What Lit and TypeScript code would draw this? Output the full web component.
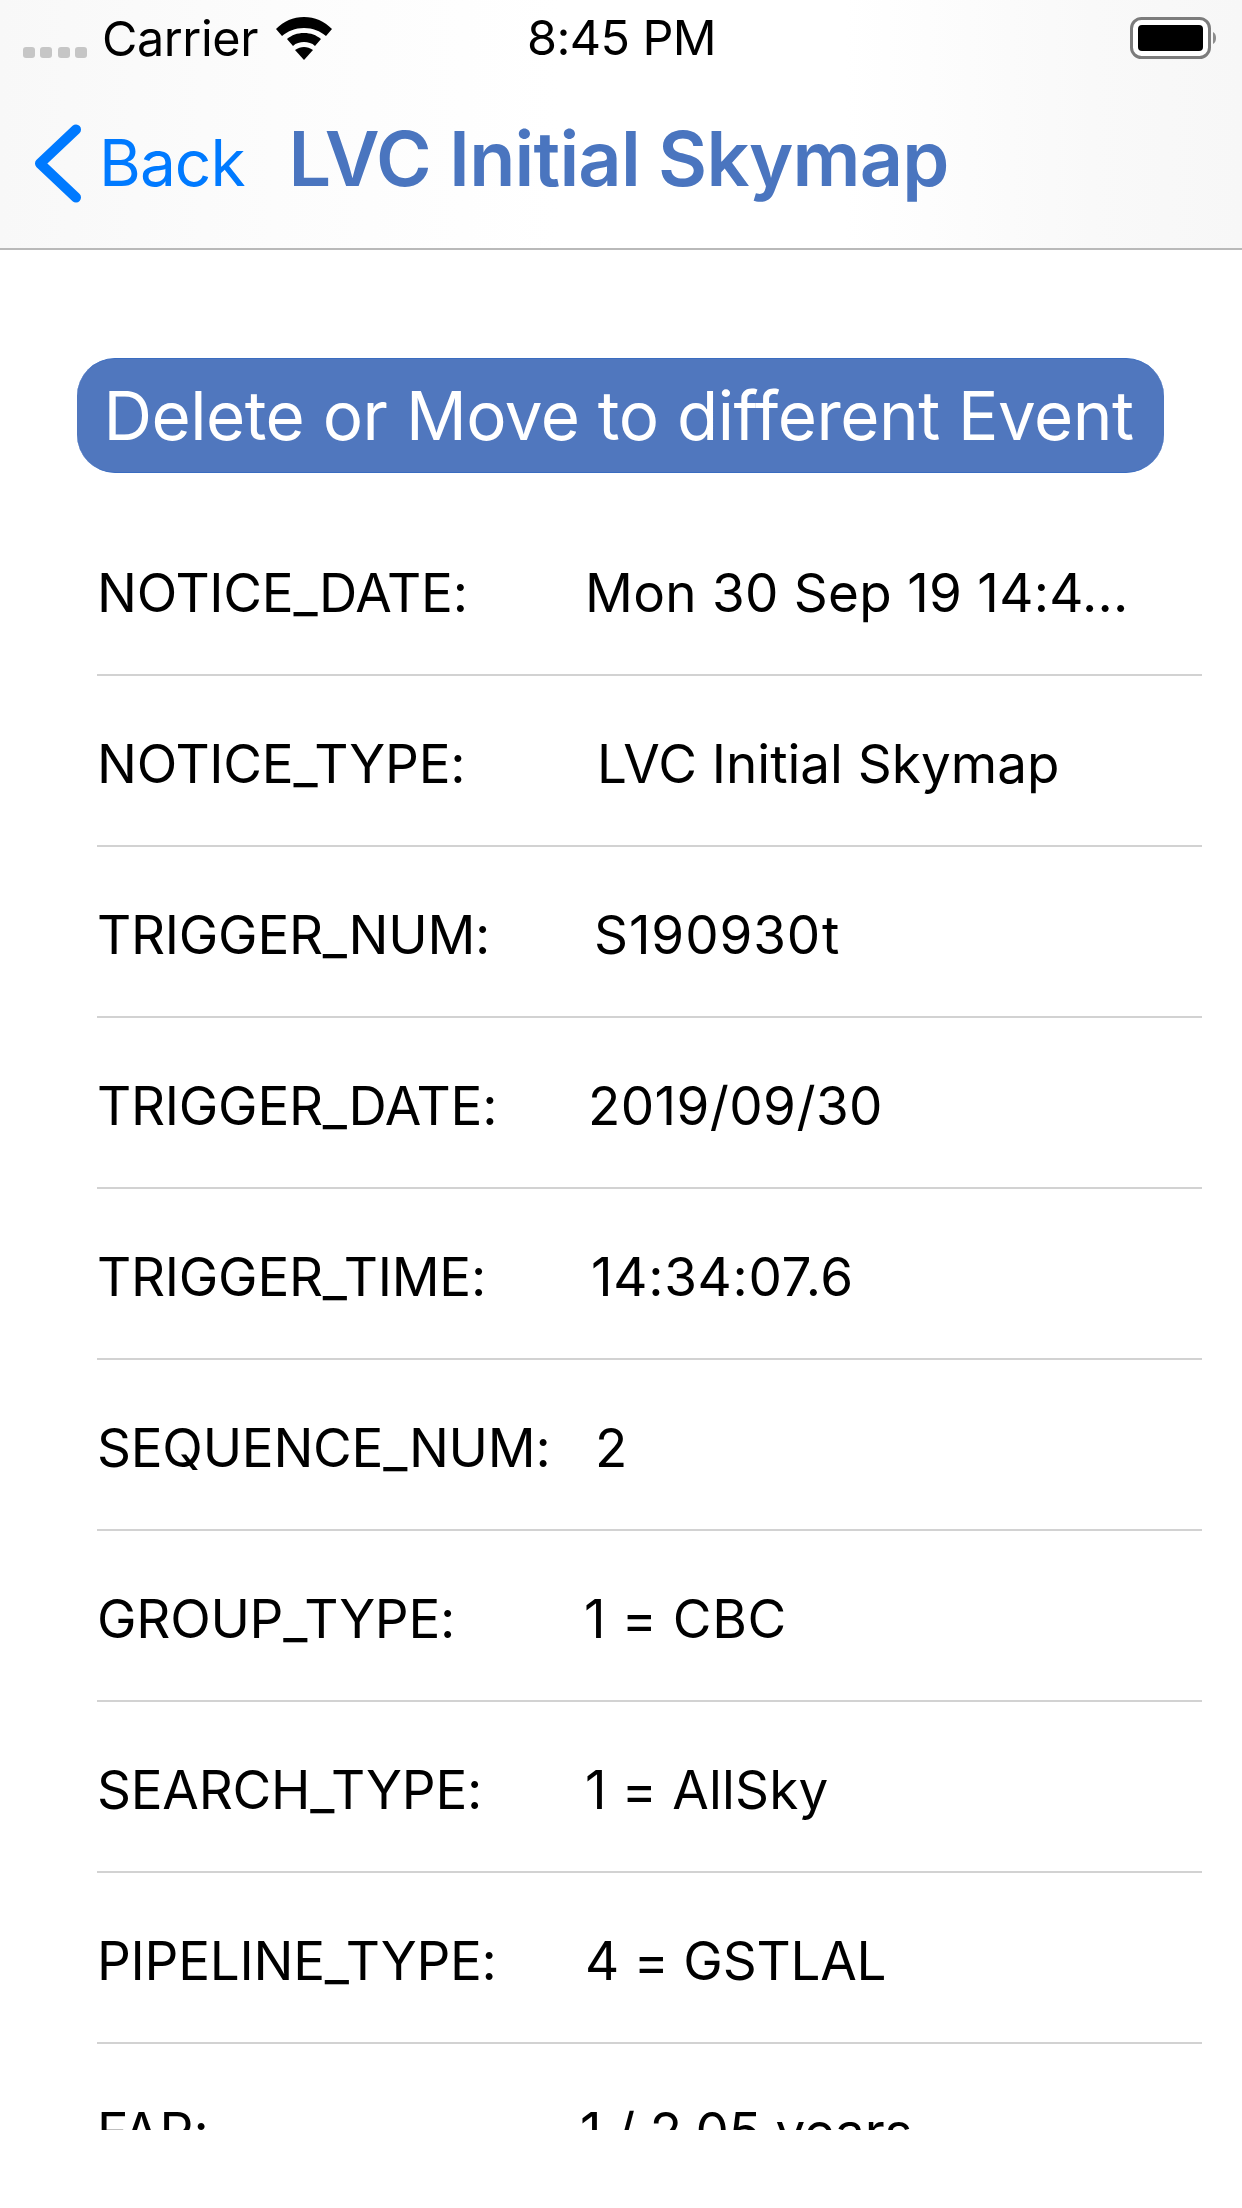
import { LitElement, html, css } from "lit";
import { customElement } from "lit/decorators.js";

const ROWS: [string, string, number, number][] = [
  ["NOTICE_DATE:", "Mon 30 Sep 19 14:4...", 585, 0.27],
  ["NOTICE_TYPE:", "LVC Initial Skymap", 597, 0],
  ["TRIGGER_NUM:", "S190930t", 594, 0.9],
  ["TRIGGER_DATE:", "2019/09/30", 588, 0.4],
  ["TRIGGER_TIME:", "14:34:07.6", 591, 0.7],
  ["SEQUENCE_NUM:", "2", 595, 0],
  ["GROUP_TYPE:", "1 = CBC", 584, 0.6],
  ["SEARCH_TYPE:", "1 = AllSky", 585, 0.2],
  ["PIPELINE_TYPE:", "4 = GSTLAL", 585, -0.2],
  ["FAR:", "1 / 2.05 years", 580, -0.2],
];

@customElement("app-root")
export class AppRoot extends LitElement {
  static styles = css`
    :host { display: block; width: 1242px; height: 2208px; background: #fff; overflow: hidden;
      font-family: Inter, "Liberation Sans", sans-serif; color: #000; }
    .header { height: 250px; box-sizing: border-box; border-bottom: 2px solid #b9b9b9;
      background: linear-gradient(90deg, #f8f8f8 0, #fcfcfc 22%, #fff 45%, #fff 68%, #f9f9f9 88%, #f7f7f7 100%); }
    .status { height: 76px; display: flex; align-items: center; padding: 0 26px 0 23px; position: relative; font-size: 48.5px; letter-spacing: -0.4px; }
    .dots { display: flex; gap: 5.3px; margin-top: 29px; }
    .dots i { width: 12px; height: 11px; border-radius: 3px; background: #c6c6c6; display: block; }
    .carrier { margin-left: 15px; }
    .wifi { margin-left: 18px; width: 56px; height: 43px; display: block; }
    .time { position: absolute; left: 527px; top: 0; line-height: 76px; letter-spacing: -0.6px; }
    .battery { margin-left: auto; width: 86px; height: 46px; display: block; }
    .nav { height: 172px; display: flex; align-items: center; padding-bottom: 3px; box-sizing: border-box; }
    .back-ico { width: 50px; height: 86px; margin-left: 33px; display: block; }
    .back { color: #007aff; font-size: 64px; margin-left: 16px; letter-spacing: -1px; margin-top: 4px; }
    .title { color: #4a75bf; font-size: 75.5px; font-weight: 600; margin-left: 44px; letter-spacing: -0.8px; margin-top: -4px; }
    .body { padding-top: 108px; }
    .btn { box-sizing: border-box; height: 115px; margin: 0 78px 0 77px; padding-right: 4px; border-radius: 38px; background: #5077be;
      border-top: 1px solid #3a6cc0; border-bottom: 1px solid #3a6cc0; color: #fff; font-size: 67.3px;
      display: flex; align-items: center; justify-content: center; letter-spacing: -0.5px; white-space: nowrap; }
    .list { margin: 32px 40px 0 97px; height: 1625px; overflow: hidden; }
    .row { height: 171px; box-sizing: border-box; border-bottom: 2px solid #d2d2d2; display: flex; align-items: center; font-size: 53px; padding-top: 6px; white-space: nowrap; }
    .label { width: 0; letter-spacing: -0.25px; }
  `;

  render() {
    return html`
      <div class="header">
        <div class="status">
          <div class="dots"><i></i><i></i><i></i><i></i></div>
          <span class="carrier">Carrier</span>
          <svg class="wifi" viewBox="0 0 56 43"><path d="M28 0C17 0 8 4 0 12l6 7C12 14 19 11 28 11s16 3 22 8l6-7C48 4 39 0 28 0z" fill="#000"/><path d="M28 16c-7 0-12 2-17 6l6 7c3-3 7-4 11-4s8 1 11 4l6-7c-5-4-10-6-17-6z" fill="#000"/><path d="M28 30c-3 0-6 1-9 3l9 10 9-10c-3-2-6-3-9-3z" fill="#000"/></svg>
          <span class="time">8:45 PM</span>
          <svg class="battery" viewBox="0 0 86 46"><rect x="1.5" y="3.5" width="78" height="39" rx="10" fill="#fff" stroke="#7c7c7c" stroke-width="3"/><rect x="8" y="10" width="65" height="26" rx="4" fill="#000"/><path d="M83 17c2 1 3 3 3 6s-1 5-3 6z" fill="#8c8c8c"/></svg>
        </div>
        <div class="nav">
          <svg class="back-ico" viewBox="0 0 50 86"><path d="M43 11.5 7 45.5 43 79.5" fill="none" stroke="#007aff" stroke-width="10" stroke-linecap="round" stroke-linejoin="round"/></svg>
          <span class="back">Back</span>
          <span class="title">LVC Initial Skymap</span>
        </div>
      </div>
      <div class="body">
        <div class="btn">Delete or Move to different Event</div>
        <div class="list">
          ${ROWS.map(([k, v, x, ls]) => html`<div class="row"><span class="label">${k}</span><span class="value" style="margin-left:${x - 97}px;letter-spacing:${ls}px">${v}</span></div>`)}
        </div>
      </div>
    `;
  }
}
